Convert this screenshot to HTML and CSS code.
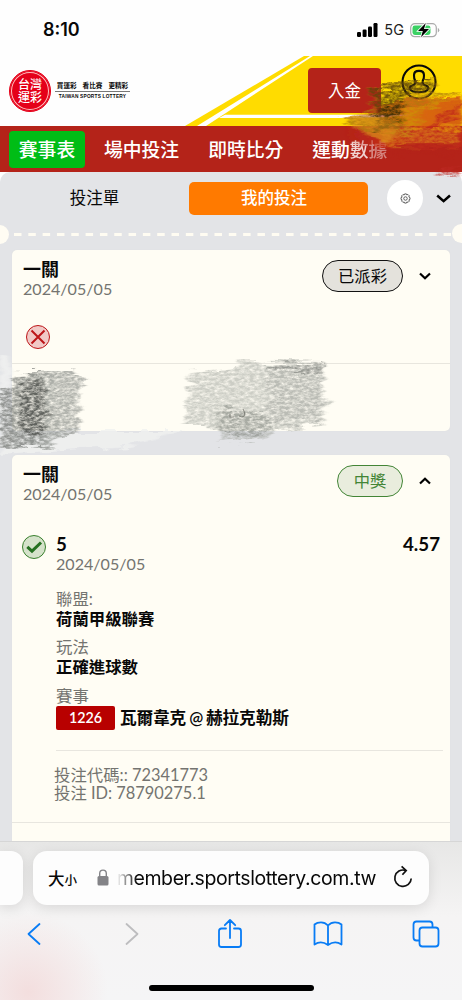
FILE: index.html
```html
<!DOCTYPE html>
<html lang="zh-Hant">
<head>
<meta charset="utf-8">
<meta name="viewport" content="width=device-width">
<title>台灣運彩</title>
<link rel="stylesheet" href="styles.css">
</head>
<body>
<div class="phone">
  <div class="status">
    <span class="time">8:10</span>
    <div class="status-right">
      <svg width="21" height="14" viewBox="0 0 21 14"><rect x="0" y="9" width="4" height="5" rx="1.2"/><rect x="5.6" y="6.5" width="4" height="7.5" rx="1.2"/><rect x="11" y="3.5" width="4" height="10.5" rx="1.2"/><rect x="16.5" y="0" width="4" height="14" rx="1.2"/></svg>
      <span class="net">5G</span>
      <svg class="battery" width="30" height="16" viewBox="0 0 30 16"><rect x=".7" y="1.7" width="25.6" height="13" rx="4" fill="none" stroke="#aaa" stroke-width="1.2"/><path d="M27.8 6v4.4q1.5-.6 1.5-2.2t-1.5-2.2" fill="#aaa"/><rect x="2.5" y="3.5" width="18" height="9.4" rx="2.4" fill="#3bd164"/><path d="M15.8 1L8 9h4.8l-1.8 6.2L19 7h-5z" stroke="#fff" stroke-width="1.6" paint-order="stroke"/></svg>
    </div>
  </div>
  <header class="brand">
    <svg class="brand-bg" width="280" height="70" viewBox="0 0 280 70"><path d="M3 70L122 0h158v70z" fill="#ffdc00"/><path d="M15 70L128 0h3L24 70z" fill="#fff"/><path d="M43 58.8h187L195 62H37z" fill="#fff"/></svg>
    <div class="logo">
      <div class="seal"><span>台灣</span><span>運彩</span></div>
      <div class="slogan"><span class="slogan-zh">買運彩&nbsp; &nbsp;看比賽&nbsp; &nbsp;更精彩</span><span class="slogan-en">TAIWAN SPORTS LOTTERY</span></div>
    </div>
    <div class="account">
      <button class="deposit">入金</button>
      <svg width="36" height="36" viewBox="0 0 36 36" fill="none" stroke="#090909" stroke-width="2.1"><circle cx="18" cy="18" r="16.5"/><path d="M14.6 17.5Q12.8 15.5 13 11.3q0-4.4 5-4.4t5 4.4q.2 4.2-1.6 6.2"/><path d="M14.6 17.5q0 3-4 4.3c-3 1.3-2 4.4 1.2 5.5q6.200 1.900 12.400 0c3.200-1.100 4.200-4.200 1.200-5.500q-4-1.300-4-4.300"/></svg>
    </div>
  </header>
  <nav class="nav"><span class="nav-item active">賽事表</span><span class="nav-item">場中投注</span><span class="nav-item">即時比分</span><span class="nav-item stats">運動<i class="fade1">數</i><i class="fade2">據</i></span></nav>
  <main class="slip">
    <div class="tabs">
      <span class="tab">投注單</span><span class="tab tab-active">我的投注</span>
      <span class="gear"><svg width="11" height="11" viewBox="0 0 12 12" fill="none" stroke="#444" stroke-width=".9"><path d="M5 1h2l.4 1.100 1.300-.5 1.400 1.400-.5 1.300L10.900 5v2l-1.200.5.5 1.300-1.400 1.400-1.300-.5L7 11H5l-.5-1.200-1.300.4-1.400-1.400.5-1.300L1.100 7V5l1.200-.5-.5-1.400 1.400-1.400 1.300.5z"/><circle cx="6" cy="6" r="1.900"/></svg></span>
      <svg class="chev-big" width="16" height="10" viewBox="0 0 16 10" fill="none" stroke="#000" stroke-width="2.500"><path d="M1.200 1.500L7.600 7.200L14 1.500"/></svg>
    </div>
    <div class="perf"><i class="notch"></i><svg width="439" height="3" viewBox="0 0 439 3"><path d="M0 1.500H439" stroke="#fffcf2" stroke-width="3" stroke-dasharray="7.500 6.820"/></svg><i class="notch notch-right"></i></div>
    <section class="card card-lost">
      <div class="card-head"><div><div class="title">一關</div><div class="date">2024/05/05</div></div>
        <div class="state"><span class="pill">已派彩</span><svg width="12" height="8" viewBox="0 0 12 8" fill="none" stroke="#000" stroke-width="2.200"><path d="M1 1.500L6 6.300L11 1.500"/></svg></div></div>
      <svg class="lost" width="26" height="26" viewBox="0 0 26 26"><circle cx="13" cy="13" r="11.500" fill="#f1c9c6" stroke="#bd1518"/><path d="M6.500 6.500L19.500 19.500M19.500 6.500L6.500 19.500" stroke="#bd1518" stroke-width="2"/></svg>
      <div class="rule"></div>
    </section>
    <section class="card card-won">
      <div class="card-head"><div><div class="title">一關</div><div class="date">2024/05/05</div></div>
        <div class="state"><span class="pill pill-won">中獎</span><svg width="12" height="8" viewBox="0 0 12 8" fill="none" stroke="#000" stroke-width="2.200"><path d="M1 6.500L6 1.700L11 6.500"/></svg></div></div>
      <div class="bet">
        <svg class="won" width="26" height="26" viewBox="0 0 26 26"><circle cx="13" cy="13" r="11.500" fill="#d5e2ca" stroke="#39802d"/><path d="M6.300 12.800L11 17.100L20 8.500" fill="none" stroke="#257020" stroke-width="3"/></svg>
        <div class="detail">
          <div class="score"><b>5</b><b>4.57</b></div>
          <div class="date">2024/05/05</div>
          <dl><dt>聯盟:</dt><dd>荷蘭甲級聯賽</dd><dt>玩法</dt><dd>正確進球數</dd><dt>賽事</dt><dd class="match"><span class="code">1226</span>瓦爾韋克 @ 赫拉克勒斯</dd></dl>
        </div>
      </div>
      <div class="ids"><div>投注代碼:: 72341773</div><div>投注 ID: 78790275.1</div></div>
    </section>
  </main>
  <footer class="browser">
    <div class="address-row"><div class="prev-page"></div>
      <div class="address"><span class="size-big">大</span><span class="size-small">小</span>
        <svg class="lock" width="12" height="17" viewBox="0 0 12 17"><path d="M2.700 8V4.600C2.700 0 9.300 0 9.300 4.600V8" fill="none" stroke="#838387" stroke-width="1.400"/><rect x=".5" y="7" width="11" height="9.500" rx="1.500" fill="#838387"/></svg>
        <span class="url">member.sportslottery.com.tw</span>
        <svg class="reload" width="20" height="24" viewBox="0 0 20 24" fill="none" stroke="#111" stroke-width="1.700"><path d="M12.500 5.400A8.200 8.200 0 1 0 18.200 13.500"/><path d="M8.600 1.300L13.200 5.500L9.400 9.800"/></svg></div></div>
    <div class="tools">
      <svg width="14" height="24" viewBox="0 0 14 24" stroke="#087cf5"><path d="M12.500 2L1.500 12L12.500 22"/></svg>
      <svg width="14" height="24" viewBox="0 0 14 24" stroke="#bdbdbf"><path d="M1.500 2L12.500 12L1.500 22"/></svg>
      <svg width="26" height="32" viewBox="0 0 26 32" stroke="#087cf5"><path d="M9 10.500H4.500Q2 10.500 2 13V26.500Q2 29 4.500 29H21.500Q24 29 24 26.500V13Q24 10.500 21.500 10.500H17M13 20V2M7.800 7.200L13 2L18.200 7.200"/></svg>
      <svg width="30" height="26" viewBox="0 0 30 26" stroke="#087cf5"><path d="M15 4.500V24M15 4.500Q12 1.300 8 1.300Q4 1.300 1.500 3.500V23.500Q8 19 15 24Q22 19 28.500 23.500V3.500Q26 1.300 22 1.300Q18 1.300 15 4.500"/></svg>
      <svg width="28" height="28" viewBox="0 0 28 28" stroke="#087cf5"><path d="M7 20.500H4.500Q1.500 20.500 1.500 17.500V4.500Q1.500 1.500 4.500 1.500H17.500Q20.500 1.500 20.500 4.500V7"/><rect x="7.500" y="7.500" width="19" height="19" rx="3"/></svg>
    </div>
    <div class="home"></div>
  </footer>
  <svg class="crayon" width="462" height="1000" viewBox="0 0 462 1000">
    <defs>
      <filter id="grain" x="-10%" y="-15%" width="120%" height="130%" color-interpolation-filters="sRGB">
        <feGaussianBlur in="SourceGraphic" stdDeviation="1.400 .4" result="soft"/>
        <feTurbulence type="fractalNoise" baseFrequency=".025 .16" numOctaves="3" seed="4" result="edge"/>
        <feDisplacementMap in="soft" in2="edge" scale="20" xChannelSelector="R" yChannelSelector="A" result="rough"/>
        <feTurbulence type="fractalNoise" baseFrequency=".2 .42" numOctaves="4" seed="9"/>
        <feColorMatrix values="0 0 0 0 0  0 0 0 0 0  0 0 0 0 0  1.700 0 0 0 -.15" result="tooth"/>
        <feComposite in="rough" in2="tooth" operator="in"/>
      </filter>
      <filter id="rough" x="-10%" y="-20%" width="120%" height="140%"><feGaussianBlur in="SourceGraphic" stdDeviation="2 .6" result="soft"/><feTurbulence type="fractalNoise" baseFrequency=".05 .13" numOctaves="3" seed="4" result="edge"/><feDisplacementMap in="soft" in2="edge" scale="12" xChannelSelector="R" yChannelSelector="G"/></filter>
      <linearGradient id="side"><stop stop-color="#bb281b" stop-opacity="0"/><stop offset=".3" stop-color="#c93218" stop-opacity=".8"/><stop offset="1" stop-color="#c52b19"/></linearGradient>
      <linearGradient id="coal"><stop stop-color="#666965"/><stop offset=".4" stop-color="#626662"/><stop offset=".6" stop-color="#858984"/><stop offset="1" stop-color="#929590"/></linearGradient>
    </defs>
    <g filter="url(#rough)"><path d="M0 356L10 358V431H185L130 446L0 454Z" fill="#f0f1f0" opacity=".8"/></g>
    <g filter="url(#grain)">
      <path d="M15 371L74 368L73 377L85 380L78 399L80 414L77 434L53 439L51 448L0 445V390L15 382Z" fill="url(#coal)" opacity=".68"/>
      <path d="M20 378L42 377L46 405L43 433L24 436L20 415Z" fill="#343633" opacity=".55"/>
      <path d="M190 371L237 366L238 360L324 362L323 392L329 400L320 425L272 430V439L219 444V429L179 426L187 404Z" fill="#a4a7a1" opacity=".56"/>
      <path d="M269 365H325L324 373L320 424L270 425Z" fill="#858982" opacity=".25"/>
      <path d="M267 364L325 362L324 371L269 371Z" fill="#676a65" opacity=".4"/>
      <path d="M219 408L270 413V430L240 437L219 432Z" fill="#646965" opacity=".35"/>
    </g>
    <path d="M230 414v3h4M243 409q4 7-1 8l-3-1" fill="none" stroke="#6a6b64" stroke-width="1.200" opacity=".7"/>
    <g filter="url(#rough)">
      <path d="M383 102L462 96V148H365L346 138V118L371 108Z" fill="url(#side)" opacity=".75"/>
      <path d="M346 117H378L398 125L392 143L369 137Z" fill="#dc991a" opacity=".65"/>
    </g>
    <g filter="url(#grain)">
      <path d="M418 111L462 96V144H397Z" fill="#c22c19" opacity=".8"/>
      <path d="M369 86L435 80L434 93L462 91L425 111L409 136L365 130L342 120L373 109Z" fill="#ad790b" opacity=".7"/>
      <path d="M370 87L431 80V92L401 102L399 126L376 133V107Z" fill="#392907" opacity=".55"/>
      <path d="M376 108L404 99V126L378 134Z" fill="#2f2507" opacity=".6"/>
      <path d="M344 115H379L404 124L462 126V148H386L380 132Z" fill="#dc921a" opacity=".55"/>
      <path d="M390 117L462 91V102L416 130ZM420 130L462 117V132Z" fill="#efa700" opacity=".42"/>
      <path d="M380 147L462 142V157H390Z" fill="#b42319" opacity=".8"/>
      <path d="M437 170L462 162L456 173L437 177Z" fill="#bd2923" opacity=".7"/>
    </g>
  </svg>
</div>
</body>
</html>
```
FILE: styles.css
```css
* { box-sizing: border-box; }
body { margin: 0; font-family: Lato, "Noto Sans CJK TC", sans-serif; color: #080808; }
.phone { position: relative; width: 462px; height: 1000px; display: flex; flex-direction: column; overflow: hidden; background: #fefefe; }
.phone svg { display: block; flex: none; }
.status { height: 56px; flex: none; display: flex; justify-content: space-between; padding: 19px 22px 0 43px; }
.time { font: 600 18px/22px Inter, sans-serif; }
.status-right { display: flex; height: 22px; align-items: center; }
.net { font: 400 14.500px/22px Inter, sans-serif; margin: 0 6px 0 6px; color: #222; }
.brand { height: 70px; flex: none; position: relative; display: flex; justify-content: space-between; }
.brand-bg { position: absolute; right: 0; top: 0; }
.logo { display: flex; padding: 14px 0 0 9px; }
.seal { width: 42px; height: 42px; border-radius: 50%; background: #e50019; border: 1px solid #e50019; box-shadow: inset 0 0 0 1px #e50019, inset 0 0 0 2px #ffc0c0; display: flex; flex-direction: column; align-items: center; justify-content: center; color: #fff; font-size: 12px; line-height: 13px; font-weight: 500; }
.slogan { margin: 11px 0 0 4px; width: 75px; display: flex; flex-direction: column; align-items: center; font-weight: 900; white-space: nowrap; }
.slogan-zh { width: 75px; border-bottom: 1px solid #777; font-size: 6.600px; line-height: 8px; padding-bottom: 2px; text-align: center; word-spacing: .4px; font-weight: 700; }
.slogan-en { font: 700 4.800px/9px "Liberation Sans", sans-serif; letter-spacing: .2px; }
.account { position: relative; display: flex; padding: 12px 25px 0 0; gap: 20px; }
.account svg { margin-top: -4px; }
.deposit { width: 73px; height: 45px; border: 0; border-radius: 4px; background: #b42319; color: #fff; font: 400 16.500px Lato, "Noto Sans CJK TC", sans-serif; padding: 0 0 1px; }
.nav { height: 46px; flex: none; background: #b42319; color: #fff; font-size: 18.800px; font-weight: 500; display: flex; align-items: center; padding: 0 0 0 9px; }
.nav-item { line-height: 37px; margin-right: 29px; white-space: nowrap; }
.nav-item i { font-style: normal; }
.fade1 { opacity: .8; }
.fade2 { opacity: .45; }
.active { width: 76px; text-align: center; background: #00bd16; border-radius: 4px; margin-right: 19px; }
.slip { height: 669px; flex: none; background: #e3e4e7; border-radius: 10px 10px 0 0; overflow: hidden; }
.tabs { height: 52px; display: flex; align-items: center; padding-left: 10px; font-size: 16.500px; }
.tab { width: 169px; text-align: center; line-height: 33px; }
.tab-active { width: 179px; margin-left: 10px; padding-right: 9px; color: #fff; background: #ff7a00; border-radius: 5px; font-weight: 500; }
.gear { width: 36px; height: 36px; margin-left: 19px; border-radius: 50%; background: #fff; display: flex; align-items: center; justify-content: center; }
.chev-big { margin: 2px 0 0 13px; }
.perf { height: 19px; display: flex; align-items: center; padding-top: 1px; }
.notch { width: 19px; height: 19px; border-radius: 50%; background: #fffcf3; margin: 0 5px 0 -10px; flex: none; }
.notch-right { margin: -1px 0 0 -1px; }
.card { width: 438px; margin-left: 12px; background: #fffdf4; border-radius: 5px; padding: 9px 11px 0; box-shadow: 0 0 1px #d9dada; }
.card-lost { height: 181px; margin-top: 7px; }
.card-won { height: 400px; margin-top: 24px; }
.card-head { display: flex; justify-content: space-between; height: 50px; }
.title { font-size: 18px; line-height: 20px; font-weight: 700; }
.date { font-size: 16.100px; line-height: 19px; color: #747470; }
.state { display: flex; align-items: center; height: 32px; gap: 16px; padding: 2px 8px 0 0; }
.pill { height: 32px; min-width: 81px; border: 1px solid #111; border-radius: 17px; background: #e4e2dc; text-align: center; font-size: 16.300px; line-height: 29px; }
.pill-won { min-width: 66px; border-color: #438536; color: #438536; background: #e9eddd; }
.lost { margin: 15px 0 0 2px; }
.rule { height: 1px; background: #e8e6de; margin: 13px -11px 0; }
.bet { display: flex; padding-top: 20px; gap: 9px; }
.won { margin: 0 0 0 -2px; }
.detail { width: 387px; flex: none; height: 217px; border-bottom: 1px solid #e8e6df; }
.score { display: flex; justify-content: space-between; font-size: 18.700px; line-height: 20px; padding-right: 3px; }
dl { margin: 15.500px 0 0; font-size: 16.400px; }
dt { line-height: 20px; color: #747470; }
dd { line-height: 20px; margin: 0 0 8.700px; font-weight: 600; }
.match { display: flex; align-items: center; height: 25px; white-space: nowrap; font-size: 16.700px; word-spacing: -1px; letter-spacing: -.15px; }
.code { width: 59px; height: 24px; margin-right: 5px; border-radius: 2px; background: #b80000; color: #fff; font-size: 14.300px; line-height: 24px; text-align: center; letter-spacing: 0; }
.ids { margin: 0 -11px; padding: 15px 0 0 42px; height: 72px; border-bottom: 1px solid #e8e6df; font-size: 16.400px; line-height: 18px; color: #747470; }
.browser { height: 159px; flex: none; background: radial-gradient(ellipse 80px 80px at 28px 150px, #f3dede, transparent), linear-gradient(#e7e7e6, #f5f4f4 75px, #f5f5f6); border-top: 1px solid #d6d6d6; }
.address-row { display: flex; padding-top: 9px; gap: 10px; }
.prev-page { width: 23px; height: 54px; background: #fdfdfd; border-radius: 0 12px 12px 0; box-shadow: 0 3px 14px #0000001c; }
.address { width: 396px; height: 54px; background: #fdfdfd; border-radius: 14px; box-shadow: 0 3px 14px #0000001c; display: flex; align-items: center; padding-left: 15px; }
.size-big { font-size: 16.500px; font-weight: 500; }
.size-small { font-size: 12.500px; font-weight: 500; margin-top: 3px; }
.lock { margin-left: 20px; margin-top: -1px; }
.url { width: 259px; margin: 0 17px 0 8px; overflow: hidden; direction: rtl; white-space: nowrap; font: 400 19.500px/26px Inter, sans-serif; letter-spacing: -.4px; mask-image: linear-gradient(to right, transparent, #000 20px); }
.reload { margin-top: -2px; }
.tools { display: grid; grid-template-columns: repeat(5, 98px); justify-items: center; align-items: center; height: 58px; margin-left: -15px; fill: none; stroke-width: 1.800; stroke-linejoin: round; stroke-linecap: round; }
.home { width: 165px; height: 6px; border-radius: 3px; background: #000; margin: 22px auto 0; }
.crayon { position: absolute; left: 0; top: 0; pointer-events: none; }
```
